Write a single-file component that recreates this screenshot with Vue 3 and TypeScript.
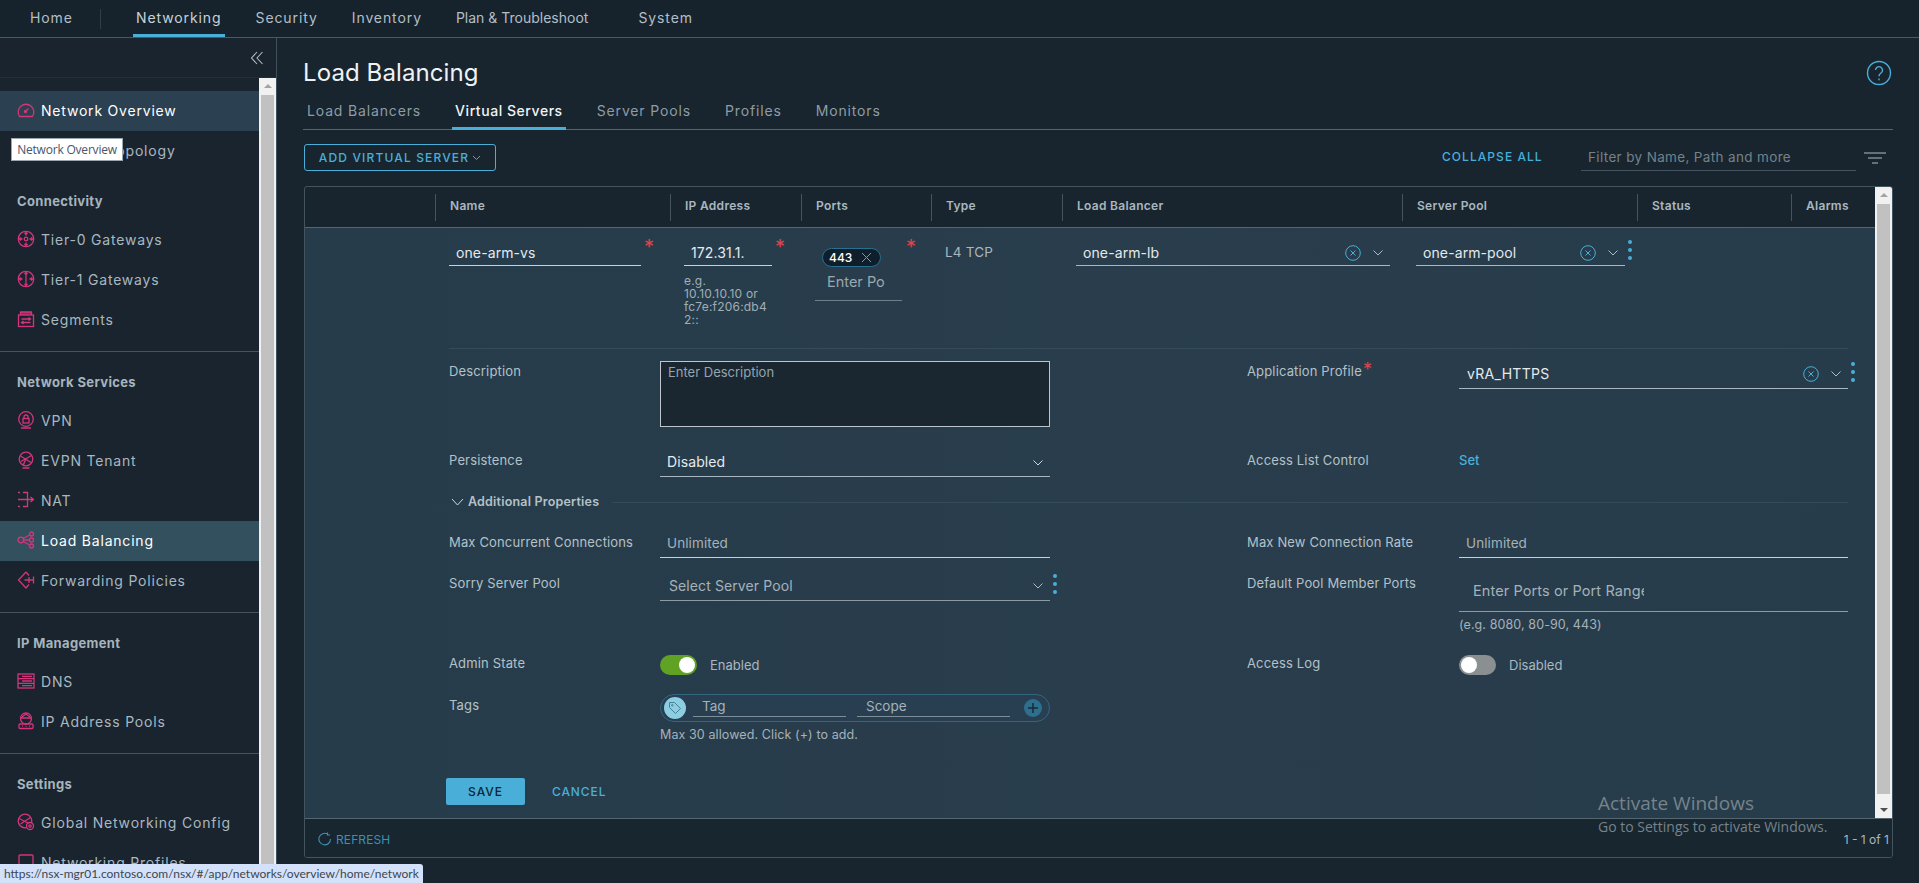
<script setup lang="ts">
interface NavItem { label: string; icon: string; active?: boolean; hover?: boolean }
interface NavGroup { title?: string; items: NavItem[] }

const topNav: string[] = ['Networking', 'Security', 'Inventory', 'Plan & Troubleshoot', 'System']
const tabs: string[] = ['Load Balancers', 'Virtual Servers', 'Server Pools', 'Profiles', 'Monitors']
const columns: string[] = ['', 'Name', 'IP Address', 'Ports', 'Type', 'Load Balancer', 'Server Pool', 'Status', 'Alarms']

const groups: NavGroup[] = [
  { items: [
    { label: 'Network Overview', icon: 'gauge', hover: true },
    { label: 'Network Topology', icon: 'topo' }
  ] },
  { title: 'Connectivity', items: [
    { label: 'Tier-0 Gateways', icon: 'tier0' },
    { label: 'Tier-1 Gateways', icon: 'tier1' },
    { label: 'Segments', icon: 'seg' }
  ] },
  { title: 'Network Services', items: [
    { label: 'VPN', icon: 'vpn' },
    { label: 'EVPN Tenant', icon: 'evpn' },
    { label: 'NAT', icon: 'nat' },
    { label: 'Load Balancing', icon: 'lb', active: true },
    { label: 'Forwarding Policies', icon: 'fwd' }
  ] },
  { title: 'IP Management', items: [
    { label: 'DNS', icon: 'dns' },
    { label: 'IP Address Pools', icon: 'pool' }
  ] },
  { title: 'Settings', items: [
    { label: 'Global Networking Config', icon: 'global' },
    { label: 'Networking Profiles', icon: 'prof' }
  ] }
]
</script>

<template>
  <div class="page">
    <header class="topbar">
      <span class="home">Home</span>
      <span class="topsep"></span>
      <nav class="topnav">
        <span v-for="(n, i) in topNav" :key="n" class="topitem" :class="{ on: i === 0 }">{{ n }}</span>
      </nav>
    </header>

    <div class="body">
      <aside class="side">
        <div class="collapse">
          <svg width="14" height="14" viewBox="0 0 14 14" fill="none" stroke="#aebcc5" stroke-width="1.1"><path d="M7 1 1.500 7 7 13M12.500 1 7 7l5.500 6"/></svg>
        </div>
        <div class="sidewrap">
          <div class="sidelist">
            <section v-for="(g, gi) in groups" :key="gi" class="group">
              <h4 v-if="g.title">{{ g.title }}</h4>
              <div v-for="it in g.items" :key="it.label" class="navrow" :class="{ active: it.active, hover: it.hover }">
                <svg class="nicon" width="18" height="18" viewBox="0 0 18 18" fill="none" stroke="#d4357b" stroke-width="1.3">
                  <template v-if="it.icon === 'gauge'"><path d="M2.600 15.500A7.800 7.800 0 1 1 15.400 15.500Z"/><path d="m8.500 10.500 3-3"/><circle cx="8.500" cy="10.500" r="1" fill="#d4357b"/></template>
                  <template v-else-if="it.icon === 'topo'"><circle cx="9" cy="4" r="2.500"/><circle cx="4" cy="14" r="2.500"/><circle cx="14" cy="14" r="2.500"/><path d="M8 6 5 12M10 6l3 6M6.500 14h5"/></template>
                  <template v-else-if="it.icon === 'tier0'"><circle cx="9" cy="9" r="7.700"/><circle cx="9" cy="9" r="1.800"/><path d="M9 2.500v3M7.500 4 9 2.500 10.500 4M9 15.500v-3M7.500 14 9 15.500l1.500-1.500M2.500 9h3M4 7.500 2.500 9 4 10.500M15.500 9h-3M14 7.500l1.500 1.500-1.500 1.500"/></template>
                  <template v-else-if="it.icon === 'tier1'"><circle cx="9" cy="9" r="7.700"/><path d="M9 2.500v13M7.500 4 9 2.500 10.500 4M7.500 14 9 15.500l1.500-1.500M2.500 9h3M4 7.500 2.500 9 4 10.500M15.500 9h-3M14 7.500l1.500 1.500-1.500 1.500"/></template>
                  <template v-else-if="it.icon === 'seg'"><path d="M3.500 5V2h11v3" fill="#8a2d5a"/><rect x="1.500" y="5" width="15" height="11.500"/><path d="M4.500 9h9M11.500 7.500 13.500 9l-2 1.500M13.500 12.500h-9M6.500 11l-2 1.500 2 1.500"/></template>
                  <template v-else-if="it.icon === 'vpn'"><circle cx="9" cy="8" r="7.300"/><rect x="6" y="7.500" width="6" height="4.500"/><path d="M7 7.500V6a2 2 0 0 1 4 0v1.500M4 17h10"/></template>
                  <template v-else-if="it.icon === 'evpn'"><circle cx="9" cy="8" r="6.800"/><path d="M3.500 5 14 11.500M14.500 4.500 4 10.500M6 14.500 9 8M5.500 17h7"/></template>
                  <template v-else-if="it.icon === 'nat'"><path d="M1 1.500h2M6 1.500h4.500v14H6M1 15.500h2M1 8.500h15.500M13.500 6l3 2.500-3 2.500"/></template>
                  <template v-else-if="it.icon === 'lb'"><circle cx="3.800" cy="9" r="2.800"/><circle cx="14.500" cy="3" r="2"/><circle cx="14.500" cy="9" r="2"/><circle cx="14.500" cy="15" r="2"/><path d="M6 7.500 12.800 4M6.600 9h6M6 10.500l6.800 3.500"/></template>
                  <template v-else-if="it.icon === 'fwd'"><path d="M9 1 1.500 9 9 17l3-3.500M12 4.500 9 1"/><path d="M7.500 9h9M16.500 5.500v7M12 6v6"/></template>
                  <template v-else-if="it.icon === 'dns'"><rect x="1" y="2" width="16" height="14"/><path d="M1 6.700h16M1 11.300h16M5 4.300h10M5 9h10M5 13.700h10"/></template>
                  <template v-else-if="it.icon === 'pool'"><circle cx="9" cy="6.500" r="5.500"/><path d="M3.500 6h11M5 5l4-3 4 3"/><rect x="2" y="12" width="14" height="4.500" rx="1"/><path d="M5 14.200h1M8.500 14.200h1M12 14.200h1"/></template>
                  <template v-else-if="it.icon === 'prof'"><rect x="2" y="2" width="14" height="14" rx="1"/></template>
                  <template v-else><circle cx="8" cy="8" r="6.800"/><path d="M2 5.500 13 11M13.500 4.500 3.500 11"/><circle cx="13" cy="13" r="3.500" fill="#19242e"/><circle cx="13" cy="13" r="1.200"/></template>
                </svg>
                <span>{{ it.label }}</span>
              </div>
            </section>
          </div>
          <div class="sbar sbar-side">
            <i class="arrow up"></i>
            <b class="thumb"></b>
          </div>
        </div>
        <div class="tip">Network Overview</div>
      </aside>

      <main class="main">
        <div class="titlerow">
          <h1>Load Balancing</h1>
          <svg width="26" height="26" viewBox="0 0 26 26" fill="none" stroke="#49afd9" stroke-width="1.400"><circle cx="13" cy="13" r="11.500"/><path d="M9.500 10a3.500 3.500 0 1 1 5.500 3c-1.300.9-2 1.500-2 3.200"/><path d="M13 18.500v1.800"/></svg>
        </div>
        <div class="tabs">
          <span v-for="(t, i) in tabs" :key="t" class="tab" :class="{ on: i === 1 }">{{ t }}</span>
        </div>

        <div class="toolbar">
          <button class="addbtn">ADD VIRTUAL SERVER
            <svg width="9" height="6" viewBox="0 0 9 6" fill="none" stroke="#49afd9"><path d="m1 1 3.500 3.500L8 1"/></svg>
          </button>
          <span class="collapse-all">COLLAPSE ALL</span>
          <span class="filter">Filter by Name, Path and more</span>
          <svg class="filter-icon" width="22" height="12" viewBox="0 0 22 12" fill="none" stroke="#aebcc5" stroke-width="1.200"><path d="M0 1h22M4 6h14M8 11h6"/></svg>
        </div>

        <div class="table">
          <div class="tablewrap">
            <div class="tablecontent">
              <div class="thead">
                <div v-for="(c, i) in columns" :key="i" class="th"><span v-if="c">{{ c }}</span></div>
              </div>

              <div class="rowbody">
                <div class="toprow">
                  <div></div>
                  <div class="cell">
                    <div class="req"><div class="field val w192"><span>one-arm-vs</span></div><em>*</em></div>
                  </div>
                  <div class="cell">
                    <div class="req"><div class="field val w88"><span>172.31.1.</span></div><em>*</em></div>
                    <p class="iphint">e.g.<br>10.10.10.10 or<br>fc7e:f206:db4<br>2::</p>
                  </div>
                  <div class="cell">
                    <div class="req ports">
                      <div class="portbox">
                        <span class="chip">443
                          <svg width="11" height="11" viewBox="0 0 11 11" fill="none" stroke="#49afd9"><path d="m1 1 9 9M10 1l-9 9"/></svg>
                        </span>
                        <span class="portph">Enter Po</span>
                      </div>
                      <em>*</em>
                    </div>
                  </div>
                  <div class="cell"><div class="typeval">L4 TCP</div></div>
                  <div class="cell">
                    <div class="field val w314 sel">
                      <span>one-arm-lb</span>
                      <svg class="clr" width="16" height="16" viewBox="0 0 16 16" fill="none" stroke="#49afd9"><circle cx="8" cy="8" r="7.300"/><path d="m5.500 5.500 5 5M10.500 5.500l-5 5"/></svg>
                      <svg class="chev" width="10" height="6" viewBox="0 0 10 6" fill="none" stroke="#aebcc5"><path d="m.5.500 4.500 4.500L9.500.5"/></svg>
                    </div>
                  </div>
                  <div class="cell poolcell">
                    <div class="field val w209 sel">
                      <span>one-arm-pool</span>
                      <svg class="clr" width="16" height="16" viewBox="0 0 16 16" fill="none" stroke="#49afd9"><circle cx="8" cy="8" r="7.300"/><path d="m5.500 5.500 5 5M10.500 5.500l-5 5"/></svg>
                      <svg class="chev" width="10" height="6" viewBox="0 0 10 6" fill="none" stroke="#aebcc5"><path d="m.5.500 4.500 4.500L9.500.5"/></svg>
                    </div>
                    <span class="dots"><i></i><i></i><i></i></span>
                  </div>
                  <div></div>
                  <div></div>
                </div>

                <div class="detail">
                  <div class="frow r-desc">
                    <label>Description</label>
                    <div class="textarea">Enter Description</div>
                    <span></span>
                    <label>Application Profile<em class="inl">*</em></label>
                    <div class="appwrap">
                      <div class="field val app h28 sel grow">
                        <span>vRA_HTTPS</span>
                        <svg class="clr" width="16" height="16" viewBox="0 0 16 16" fill="none" stroke="#49afd9"><circle cx="8" cy="8" r="7.300"/><path d="m5.500 5.500 5 5M10.500 5.500l-5 5"/></svg>
                        <svg class="chev" width="10" height="6" viewBox="0 0 10 6" fill="none" stroke="#aebcc5"><path d="m.5.500 4.500 4.500L9.500.5"/></svg>
                      </div>
                      <span class="dots"><i></i><i></i><i></i></span>
                    </div>
                  </div>

                  <div class="frow r-pers">
                    <label>Persistence</label>
                    <div class="field val h27 sel">
                      <span>Disabled</span>
                      <svg class="chev" width="10" height="6" viewBox="0 0 10 6" fill="none" stroke="#cfd8dc"><path d="m.5.500 4.500 4.500L9.500.5"/></svg>
                    </div>
                    <span></span>
                    <label>Access List Control</label>
                    <a class="setlink">Set</a>
                  </div>

                  <div class="addl">
                    <svg width="13" height="8" viewBox="0 0 13 8" fill="none" stroke="#cfd8dc"><path d="m1 1 5.500 6L12 1"/></svg>
                    <span>Additional Properties</span>
                    <i></i>
                  </div>

                  <div class="frow r-max">
                    <label>Max Concurrent Connections</label>
                    <div class="field ph h26 bright"><span>Unlimited</span></div>
                    <span></span>
                    <label>Max New Connection Rate</label>
                    <div class="field ph h26 bright"><span>Unlimited</span></div>
                  </div>

                  <div class="frow r-sorry">
                    <label>Sorry Server Pool</label>
                    <div class="sorry">
                      <div class="field ph h27 sel grow">
                        <span>Select Server Pool</span>
                        <svg class="chev" width="10" height="6" viewBox="0 0 10 6" fill="none" stroke="#aebcc5"><path d="m.5.500 4.500 4.500L9.500.5"/></svg>
                      </div>
                      <span class="dots out"><i></i><i></i><i></i></span>
                    </div>
                    <span></span>
                    <label>Default Pool Member Ports</label>
                    <div>
                      <div class="field ph h38 pad14"><span class="clip">Enter Ports or Port Range</span></div>
                      <p class="subhint">(e.g. 8080, 80-90, 443)</p>
                    </div>
                  </div>

                  <div class="frow r-admin">
                    <label>Admin State</label>
                    <div class="togwrap"><span class="toggle on"><i></i></span><span>Enabled</span></div>
                    <span></span>
                    <label>Access Log</label>
                    <div class="togwrap"><span class="toggle"><i></i></span><span>Disabled</span></div>
                  </div>

                  <div class="frow r-tags">
                    <label>Tags</label>
                    <div class="tagcol">
                      <div class="tagpill">
                        <span class="tagicon">
                          <svg width="14" height="14" viewBox="0 0 14 14" fill="none" stroke="#4a7f96"><path d="M1.500 1.500h5l6 6-5 5-6-6z"/><circle cx="4.300" cy="4.300" r=".8"/></svg>
                        </span>
                        <span class="tagin first">Tag</span>
                        <span class="tagin">Scope</span>
                        <span class="plus">
                          <svg width="12" height="12" viewBox="0 0 12 12" fill="none" stroke="#172a35" stroke-width="1.500"><path d="M6 1v10M1 6h10"/></svg>
                        </span>
                      </div>
                      <p class="subhint tagnote">Max 30 allowed. Click (+) to add.</p>
                    </div>
                  </div>

                  <div class="actions">
                    <button class="save">SAVE</button>
                    <span class="cancel">CANCEL</span>
                  </div>
                </div>
              </div>
            </div>
            <div class="sbar sbar-table">
              <i class="arrow up"></i>
              <b class="thumb"></b>
              <i class="arrow down"></i>
            </div>
          </div>
          <div class="tfoot">
            <svg width="14" height="14" viewBox="0 0 14 14" fill="none" stroke="#3b90b3" stroke-width="1.100"><path d="M12.500 7A5.800 5.800 0 1 1 9.500 2M9.500 .5V3H12"/></svg>
            <span class="refresh">REFRESH</span>
            <span class="count">1 - 1 of 1</span>
          </div>
        </div>
      </main>
    </div>

    <div class="activate">
      <div class="a1">Activate Windows</div>
      <div class="a2">Go to Settings to activate Windows.</div>
    </div>
    <div class="status">https://nsx-mgr01.contoso.com/nsx/#/app/networks/overview/home/network</div>
  </div>
</template>

<style>
html, body { margin: 0; background: #18252e; overflow: hidden; }
</style>

<style scoped>
* { box-sizing: border-box; }
.page { position: relative; width: 1919px; height: 883px; overflow: hidden; background: #18252e; color: #adbbc4; font-family: Inter, "Noto Sans", sans-serif; font-size: 13px; }
p, h1, h4 { margin: 0; font-weight: normal; }

.topbar { height: 38px; display: flex; align-items: stretch; background: #17232c; border-bottom: 1px solid #485a65; font-size: 14px; letter-spacing: .9px; }
.home { padding: 9px 0 0 30px; width: 100px; color: #b2bfc7; }
.topsep { width: 1px; height: 20px; margin-top: 9px; background: #2e3f4a; }
.topnav { display: flex; margin-left: 32px; }
.topitem { padding: 9px 3px 0; margin-right: 28px; color: #b2bfc7; white-space: nowrap; }
.topitem:nth-child(4) { letter-spacing: 0; margin-right: 44px; }
.topitem.on { color: #c6d3da; border-bottom: 3px solid #49afd9; height: 37px; }

.body { display: flex; height: 845px; }
.side { position: relative; width: 277px; border-right: 1px solid #3f505b; background: #19242e; }
.collapse { height: 40px; border-bottom: 1px solid #202f39; display: flex; justify-content: flex-end; align-items: center; padding-right: 12px; }
.sidewrap { display: flex; height: 805px; }
.sidelist { width: 259px; padding-top: 13px; overflow: hidden; }
.group { height: 141px; border-top: 1px solid #44545f; }
.group:nth-child(1) { height: 80px; border-top: 0; }
.group:nth-child(2) { height: 180px; border-top: 0; }
.group:nth-child(3) { height: 261px; }
.group h4 { font-size: 13px; font-weight: 700; color: #a6b4bd; padding: 22px 0 0 17px; height: 49px; letter-spacing: .35px; }
.navrow { height: 40px; display: flex; align-items: center; padding: 0 0 2px 17px; font-size: 14px; letter-spacing: .8px; color: #a9b7c0; white-space: nowrap; }
.navrow .nicon { margin-right: 6px; flex: none; }
.navrow.hover { background: #2b4050; color: #fff; }
.navrow.active { background: #33505f; color: #fff; }

.tip { position: absolute; left: 11px; top: 100px; width: 112px; height: 23px; background: #fff; border: 1px solid #9ba7af; color: #47566a; font-family: "Open Sans", sans-serif; font-size: 12px; line-height: 21px; text-align: center; letter-spacing: -.2px; }

.sbar { position: relative; flex: none; width: 17px; background: #f1f1f1; }
.sbar-side { height: 805px; }
.sbar .thumb { position: absolute; left: 2px; right: 2px; background: #c1c1c1; }
.sbar-side .thumb { top: 17px; bottom: 4px; }
.arrow { position: absolute; left: 5px; width: 0; height: 0; border-left: 4px solid transparent; border-right: 4px solid transparent; }
.arrow.up { top: 6px; border-bottom: 4px solid #a3a3a3; }
.arrow.down { bottom: 6px; border-top: 4px solid #505050; }

.main { flex: 1; min-width: 0; padding: 0 26px 0 26px; background: #18252e; }
.titlerow { height: 55px; display: flex; justify-content: space-between; align-items: center; padding: 13px 1px 0 0; }
.titlerow svg { margin-top: 2px; }
h1 { font-size: 24px; color: #eef2f4; letter-spacing: .1px; }
.tabs { height: 37px; display: flex; border-bottom: 1px solid #54656f; padding-left: 1px; }
.tab { padding: 9px 3px 0; margin-right: 28px; font-size: 14px; letter-spacing: .85px; color: #8e9ca5; white-space: nowrap; height: 37px; }
.tab.on { color: #f0f4f6; border-bottom: 3px solid #49afd9; font-weight: 500; letter-spacing: .55px; }

.toolbar { height: 56px; display: flex; align-items: flex-start; padding-top: 14px; margin-left: 1px; }
.addbtn { width: 192px; height: 27px; background: transparent; border: 1px solid #49afd9; border-radius: 3px; color: #49afd9; font-family: inherit; font-size: 12px; font-weight: 500; letter-spacing: 1.150px; padding: 0; display: flex; align-items: center; justify-content: center; gap: 3px; }
.collapse-all { margin-left: 946px; width: 139px; padding-top: 5px; font-size: 12px; font-weight: 500; letter-spacing: 1.050px; color: #49afd9; white-space: nowrap; }
.filter { width: 275px; height: 27px; border-bottom: 1px solid #44545f; padding: 5px 0 0 7px; font-size: 13.500px; color: #73828b; letter-spacing: .35px; white-space: nowrap; }
.filter-icon { margin: 8px 0 0 8px; }

.table { width: 1589px; height: 672px; margin-left: 1px; border: 1px solid #44545f; border-radius: 3px; overflow: hidden; }
.tablewrap { display: flex; height: 632px; border-bottom: 1px solid #55666f; }
.tablecontent { width: 1570px; flex: none; }
.sbar-table { height: 631px; }
.sbar-table .thumb { top: 17px; bottom: 24px; }

.thead { display: grid; grid-template-columns: 130px 235px 131px 130px 131px 340px 235px 154px 84px; height: 41px; border-bottom: 1px solid #55666f; align-items: center; }
.th { height: 27px; line-height: 23px; padding-left: 14px; font-size: 12px; font-weight: 600; color: #a9b7c0; letter-spacing: .3px; border-left: 1px solid #44545f; white-space: nowrap; }
.th:first-child { border-left: 0; }

.rowbody { height: 590px; background: #283c4b; background-image: linear-gradient(90deg, #263c4a, #293d4c 50%, #273c4a); }
.toprow { display: grid; grid-template-columns: 130px 235px 131px 130px 131px 340px 235px 154px 84px; height: 120px; }
.cell { padding: 10px 0 0 14px; position: relative; }
.req { display: flex; align-items: flex-start; gap: 3px; }
.req em { font-style: normal; color: #e0434b; font-size: 20px; line-height: 18px; }
.inl { font-style: normal; color: #e0434b; font-size: 18px; margin-left: 1px; line-height: 10px; }
.field { display: flex; align-items: center; padding-left: 7px; border-bottom: 1px solid #a9b7c0; font-size: 14px; letter-spacing: .1px; white-space: nowrap; }
.field > span:first-child { flex: 1; min-width: 0; }
.val { color: #e4eaee; height: 28px; padding-top: 2px; }
.ph { color: #a5b2ba; font-size: 14px; border-color: #8d9ba3; }
.bright { border-color: #c8d1d6; font-size: 13.500px; }
.detail .field { padding-top: 0; padding-bottom: 3px; }
.detail .ph.h27, .detail .ph.h38 { padding-bottom: 4px; }
.detail .app { padding-left: 8px; letter-spacing: .3px; }
.detail .sel svg { margin-top: 2px; }
.w192 { width: 192px; border-color: #c8d1d6; }
.w88 { width: 88px; border-color: #c8d1d6; }
.w314 { width: 314px; }
.w209 { width: 209px; flex: none; }
.h26 { height: 26px; }
.h27 { height: 27px; }
.h28 { height: 28px; }
.h38 { height: 38px; }
.pad14 { padding-left: 14px; font-size: 14.500px; }
.clip { display: block; max-width: 171px; overflow: hidden; }
.grow { flex: 1; min-width: 0; }
.sel .clr { margin-right: 12px; }
.sel .chev { margin-right: 7px; }
.iphint { font-size: 12px; line-height: 13px; color: #a0aeb6; margin-top: 8px; width: 95px; letter-spacing: .2px; }
.ports { gap: 4px; }
.portbox { width: 87px; height: 53px; border-bottom: 1px solid #6f8089; padding-left: 7px; margin-top: 10px; display: flex; flex-direction: column; align-items: flex-start; }
.chip { width: 59px; height: 19px; border: 1px solid #2b6f90; border-radius: 10px; background: #0e1e2a; color: #fff; font-size: 12px; font-weight: 500; line-height: 17px; padding-left: 6px; display: flex; align-items: center; gap: 9px; flex: none; }
.portph { margin: 6px 0 0 5px; font-size: 14.500px; color: #9aa8b0; white-space: nowrap; width: 62px; overflow: hidden; }
.typeval { padding-top: 6px; font-size: 13.500px; color: #a9b7c0; letter-spacing: .2px; }
.poolcell { display: flex; align-items: flex-start; }
.dots { display: flex; flex-direction: column; gap: 4px; margin-top: 2px; flex: none; width: 4px; margin-left: 3px; }
.dots i { width: 4px; height: 4px; border-radius: 50%; background: #49afd9; }

.detail { margin: 0 27px 0 144px; border-top: 1px solid #364b59; }
.frow { display: grid; grid-template-columns: 211px 390px 197px 212px 389px; align-items: start; }
.frow label { font-size: 13px; line-height: 20px; color: #b4c1c9; letter-spacing: .15px; white-space: nowrap; }
.r-desc { height: 101px; padding-top: 12px; }
.textarea { width: 390px; height: 66px; background: #1a2731; border: 1px solid #bcc6cc; padding: 2px 7px; font-size: 13px; line-height: 16px; color: #96a4ad; }
.appwrap { display: flex; align-items: flex-start; width: 396px; }
.appwrap .dots { margin-top: 1px; }
.r-pers { height: 42px; }
.setlink { font-size: 13px; line-height: 20px; color: #49afd9; font-weight: 500; }
.addl { height: 40px; display: flex; align-items: flex-start; padding: 0 0 0 2px; font-size: 12.500px; font-weight: 600; color: #b4c1c9; letter-spacing: .2px; white-space: nowrap; }
.addl svg { margin: 6px 4px 0 0; }
.addl span { line-height: 20px; }
.addl i { flex: 1; height: 1px; background: #364b59; margin: 10px 0 0 13px; }
.r-max { height: 42px; }
.r-sorry { height: 79px; }
.r-sorry label { margin-top: -1px; }
.sorry { display: flex; align-items: flex-start; position: relative; width: 390px; }
.detail .sorry .field { padding-left: 9px; }
.dots.out { position: absolute; left: 393px; top: 0; margin: 0; }
.subhint { font-size: 12.500px; line-height: 16px; color: #a5b2ba; margin-top: 5px; letter-spacing: .1px; white-space: nowrap; }
.r-admin { height: 42px; }
.togwrap { display: flex; align-items: center; gap: 13px; height: 20px; margin-top: 2px; font-size: 13px; color: #a9b7c0; }
.toggle { position: relative; width: 37px; height: 20px; border-radius: 10px; background: #8a8f92; flex: none; }
.toggle.on { background: #5fa224; }
.toggle i { position: absolute; left: 2px; top: 2px; width: 16px; height: 16px; border-radius: 50%; background: #fff; }
.toggle.on i { left: 19px; }
.r-tags { height: 75px; }
.tagcol { margin-top: -1px; }
.tagpill { width: 390px; height: 28px; border: 1px solid #356680; border-radius: 14px; background: #283f52; display: flex; align-items: center; padding-left: 3px; }
.tagicon { width: 22px; height: 22px; border-radius: 50%; background: #8ccfe2; display: flex; align-items: center; justify-content: center; flex: none; }
.tagin { width: 153px; height: 18px; margin-left: 11px; border-bottom: 1px solid #7e8d96; font-size: 13.500px; line-height: 15px; color: #a5b2ba; padding-left: 9px; }
.tagin.first { margin-left: 7px; }
.plus { width: 18px; height: 18px; border-radius: 50%; background: #2d6f8d; margin-left: 14px; display: flex; align-items: center; justify-content: center; flex: none; }
.tagnote { margin-top: 5px; }
.actions { display: flex; align-items: center; margin-left: -3px; padding-top: 8px; }
.save { width: 79px; height: 27px; background: #49afd9; border: 0; border-radius: 2px; font-family: inherit; font-size: 12px; font-weight: 500; letter-spacing: 1px; color: #0f2431; padding: 0; }
.cancel { margin-left: 27px; font-size: 12px; font-weight: 500; letter-spacing: .9px; color: #49afd9; }

.tfoot { height: 38px; display: flex; align-items: center; padding: 2px 3px 0 13px; background: #182630; }
.refresh { margin-left: 4px; font-size: 12px; color: #3b90b3; letter-spacing: .1px; }
.count { margin-left: auto; font-size: 12px; color: #a9b7c0; }

.activate { position: absolute; left: 1598px; top: 790px; color: #75838b; font-family: "Open Sans", sans-serif; pointer-events: none; white-space: nowrap; }
.a1 { font-size: 19px; line-height: 27px; }
.a2 { font-size: 14px; line-height: 19px; }
.status { position: absolute; left: 0; bottom: 0; height: 19px; width: 423px; background: #d3e2fa; border-top-right-radius: 3px; color: #3c4650; font-family: Lato, sans-serif; font-size: 12px; line-height: 19px; padding-left: 4px; white-space: nowrap; overflow: hidden; }
</style>
